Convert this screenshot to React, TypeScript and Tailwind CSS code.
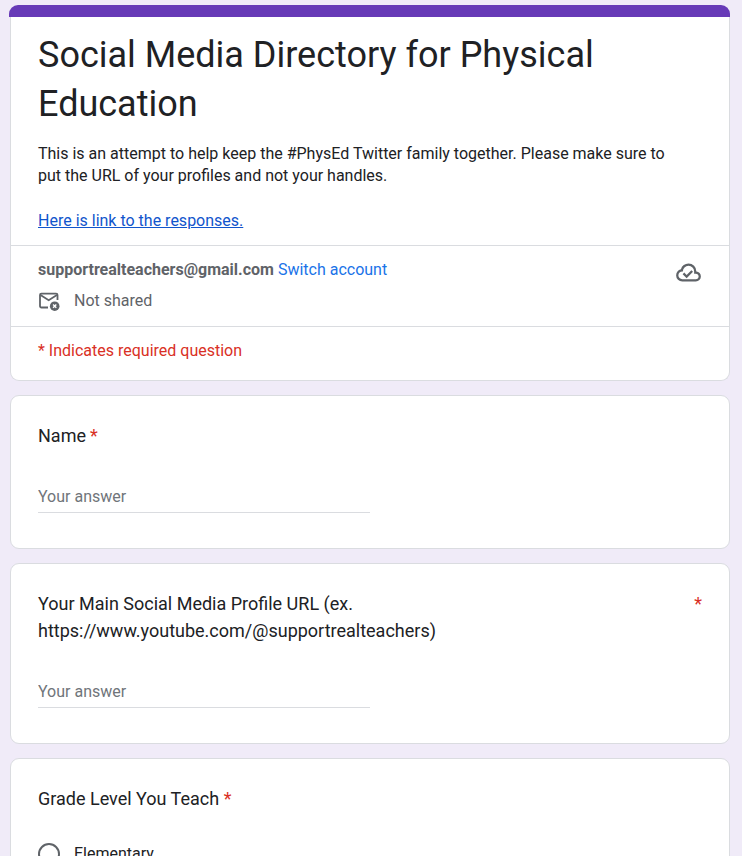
import type { ReactNode } from "react";

function CloudDoneIcon() {
  return (
    <svg viewBox="0 -960 960 960" className="size-[27px]" fill="#5f6368" aria-hidden="true">
      <path d="m414-280 226-226-58-58-169 169-84-84-57 57 142 142ZM260-160q-91 0-155.500-63T40-377q0-78 47-139t123-78q25-92 100-149t170-57q117 0 198.500 81.500T760-520q69 8 114.500 59.500T920-340q0 75-52.500 127.500T740-160H260Zm0-80h480q42 0 71-29t29-71q0-42-29-71t-71-29h-60v-80q0-83-58.500-141.500T480-720q-83 0-141.500 58.500T280-520h-20q-58 0-99 41t-41 99q0 58 41 99t99 41Z" />
    </svg>
  );
}

function MailOffIcon() {
  return (
    <svg viewBox="0 0 22 20" className="h-5 w-[22px]" fill="none" aria-hidden="true">
      <path
        d="M10 16.5H3.400A1.400 1.400 0 0 1 2 15.100V4A1.400 1.400 0 0 1 3.400 2.600h14.700a1.400 1.400 0 0 1 1.400 1.400V9"
        stroke="#5f6368"
        strokeWidth="1.8"
      />
      <path d="M2.5 4l8.200 5.200 8.200-5.200" stroke="#5f6368" strokeWidth="1.8" />
      <circle cx="16.7" cy="15.2" r="4.8" fill="#5f6368" />
      <path d="M15.1 13.6l3.200 3.200M18.3 13.6l-3.200 3.200" stroke="#fff" strokeWidth="1.400" />
    </svg>
  );
}

function Card({ children }: { children: ReactNode }) {
  return (
    <section className="ml-px rounded-[9px] border border-[#dadce0] bg-white px-[27px] pt-[26px] pb-[35px]">
      {children}
    </section>
  );
}

function TextQuestion({ id, title, inline }: { id: string; title: string; inline?: boolean }) {
  return (
    <Card>
      <label htmlFor={id} className={inline ? "flex gap-1 text-lg leading-[27px]" : "flex justify-between text-lg leading-[27px]"}>
        <span>{title}</span>
        <span className="text-[#d93025]">*</span>
      </label>
      <input
        id={id}
        type="text"
        required
        placeholder="Your answer"
        className="mt-[36px] block h-7 w-1/2 border-b border-[#dadce0] bg-transparent pb-[5px] text-base leading-[22px] outline-none placeholder:text-[#70757a]"
      />
    </Card>
  );
}

export default function App() {
  return (
    <main className="h-screen overflow-hidden bg-[#f0ebf8] pt-[5px] pr-3 pl-[9px] font-[Roboto,sans-serif] text-[#202124]">
      <form className="flex flex-col gap-[14px]">
        <header>
          <div className="h-3 rounded-t-[9px] bg-[#673ab7]" />
          <div className="ml-px rounded-b-[9px] border border-t-0 border-[#dadce0] bg-white text-base leading-[22px]">
            <div className="px-[27px] pt-[14px] pb-[13px]">
              <h1 className="text-4xl leading-[49px]">Social Media Directory for Physical Education</h1>
              <p className="mt-[14px] pr-5">
                This is an attempt to help keep the #PhysEd Twitter family together. Please make sure to put the URL of
                your profiles and not your handles.
              </p>
              <a href="#responses" className="mt-[23px] inline-block text-[#1155cc] underline">
                Here is link to the responses.
              </a>
            </div>
            <div className="flex items-start justify-between border-y border-[#dadce0] px-[27px] pt-[13px] pb-[14px] text-[#5f6368]">
              <div>
                <p>
                  <b className="font-bold">supportrealteachers@gmail.com</b>{" "}
                  <a href="#switch" className="text-[#1a73e8]">
                    Switch account
                  </a>
                </p>
                <p className="mt-[9px] flex items-center gap-[14px]">
                  <MailOffIcon />
                  Not shared
                </p>
              </div>
              <CloudDoneIcon />
            </div>
            <p className="px-[27px] pt-[13px] pb-[18px] text-[#d93025]">* Indicates required question</p>
          </div>
        </header>

        <TextQuestion id="name" title="Name" inline />
        <TextQuestion
          id="profile"
          title="Your Main Social Media Profile URL (ex. https://www.youtube.com/@supportrealteachers)"
        />

        <Card>
          <fieldset>
            <legend className="text-lg leading-[27px]">
              Grade Level You Teach <span className="text-[#d93025]">*</span>
            </legend>
            <label className="mt-[31px] flex items-center gap-[14px] text-base leading-[22px]">
              <input
                type="radio"
                name="grade"
                className="size-[22px] appearance-none rounded-full border-2 border-[#5f6368] checked:bg-[#673ab7]"
              />
              Elementary
            </label>
          </fieldset>
        </Card>
      </form>
    </main>
  );
}
